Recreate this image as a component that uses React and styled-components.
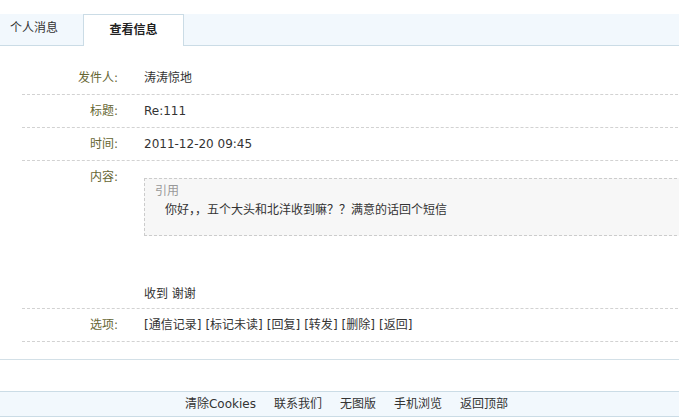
import React from "react";
import styled, { createGlobalStyle } from "styled-components";

const Global = createGlobalStyle`
  html, body { margin: 0; padding: 0; overflow: hidden; background: #fff; }
  body {
    font-family: "DejaVu Sans", "Noto Sans CJK SC", sans-serif;
    font-size: 12px;
    color: #333;
  }
`;

const Page = styled.div`
  width: 693px;
  padding-top: 14px;
`;

const TabBar = styled.div`
  display: flex;
  height: 31px;
  background: #f2f8fd;
  border-bottom: 1px solid #cbdce6;
`;

const Tab = styled.div`
  box-sizing: border-box;
  height: ${(p) => (p.$active ? "32px" : "31px")};
  width: ${(p) => (p.$active ? "101px" : "83px")};
  padding-left: ${(p) => (p.$active ? "0" : "10px")};
  text-align: ${(p) => (p.$active ? "center" : "left")};
  line-height: ${(p) => (p.$active ? "30px" : "29px")};
  font-weight: ${(p) => (p.$active ? "bold" : "normal")};
  color: ${(p) => (p.$active ? "#222" : "#333")};
  background: ${(p) => (p.$active ? "#fff" : "transparent")};
  border: ${(p) => (p.$active ? "1px solid #cbdce6" : "none")};
  border-bottom: none;
`;

const Content = styled.div`
  padding: 16px 0 17px 0;
  border-bottom: 1px solid #d3e0e7;
`;

const Table = styled.div`
  margin-left: 22px;
`;

const Row = styled.div`
  display: grid;
  grid-template-columns: 96px 1fr;
  column-gap: 26px;
  border-bottom: 1px dashed #d2d2d2;
  min-height: 32px;
  padding: ${(p) => (p.$tall ? "7px 0 6px" : "0")};
  line-height: ${(p) => (p.$tall ? "18px" : "32px")};
  align-items: start;
`;

const Label = styled.div`
  text-align: right;
  color: #666633;
`;

const Value = styled.div`
  color: #333;
`;

const Quote = styled.div`
  margin-top: 10px;
  margin-right: 6px;
  border: 1px dashed #cccccc;
  background: #f7f7f7;
  padding: 4px 10px 18px 10px;
  line-height: 16px;
`;

const QuoteTitle = styled.div`
  color: #999;
`;

const QuoteText = styled.div`
  margin-top: 2px;
  padding-left: 10px;
  color: #333;
  font-family: "Noto Sans CJK SC", sans-serif;
`;

const Reply = styled.div`
  margin-top: 50px;
  line-height: 16px;
`;

const Link = styled.a`
  color: #333;
  text-decoration: none;
  margin-right: 4px;
`;

const Footer = styled.div`
  margin-top: 31px;
  height: 24px;
  line-height: 24px;
  background: #f2f8fd;
  border-top: 1px solid #cbdce6;
  border-bottom: 1px solid #cbdce6;
  display: flex;
  justify-content: center;
  gap: 18px;
`;

const FootLink = styled.a`
  color: #333;
  text-decoration: none;
`;

export default function App() {
  const ops = ["通信记录", "标记未读", "回复", "转发", "删除", "返回"];
  return (
    <Page>
      <Global />
      <TabBar>
        <Tab>个人消息</Tab>
        <Tab $active>查看信息</Tab>
      </TabBar>
      <Content>
        <Table>
          <Row>
            <Label>发件人:</Label>
            <Value>涛涛惊地</Value>
          </Row>
          <Row>
            <Label>标题:</Label>
            <Value>Re:111</Value>
          </Row>
          <Row>
            <Label>时间:</Label>
            <Value>2011-12-20 09:45</Value>
          </Row>
          <Row $tall>
            <Label>内容:</Label>
            <Value>
              <Quote>
                <QuoteTitle>引用</QuoteTitle>
                <QuoteText>你好，，五个大头和北洋收到嘛？？满意的话回个短信</QuoteText>
              </Quote>
              <Reply>收到 谢谢</Reply>
            </Value>
          </Row>
          <Row>
            <Label>选项:</Label>
            <Value>
              {ops.map((o) => (
                <Link key={o} href="#">[{o}]</Link>
              ))}
            </Value>
          </Row>
        </Table>
      </Content>
      <Footer>
        <FootLink href="#">清除Cookies</FootLink>
        <FootLink href="#">联系我们</FootLink>
        <FootLink href="#">无图版</FootLink>
        <FootLink href="#">手机浏览</FootLink>
        <FootLink href="#">返回顶部</FootLink>
      </Footer>
    </Page>
  );
}
